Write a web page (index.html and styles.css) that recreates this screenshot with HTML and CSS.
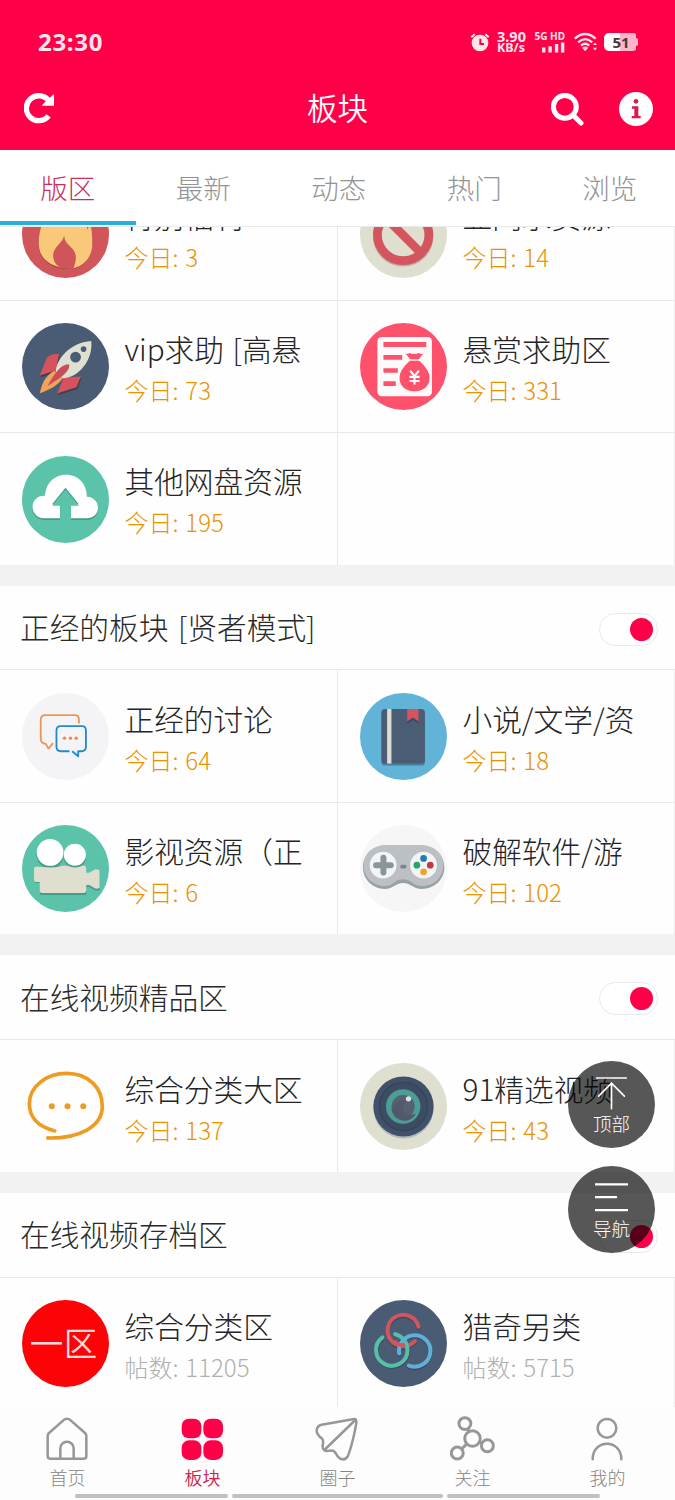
FILE: index.html
```html
<!DOCTYPE html>
<html lang="zh-CN">
<head>
<meta charset="utf-8">
<title>板块</title>
<link rel="stylesheet" href="styles.css">
</head>
<body>
<div class="app">
  <header class="top">
    <div class="status">
      <span class="clock">23:30</span>
      <div class="status-right">
        <svg class="alarm" viewBox="0 0 60 60"><circle cx="30" cy="33" r="25"/><path class="ear" d="M4 16 14 7M56 16 46 7"/><path class="hand" d="M31 20v16h11"/></svg>
        <div class="speed"><span>3.90</span><span>KB/s</span></div>
        <div class="cell-net"><span>5G HD</span>
          <svg viewBox="0 0 68 32"><path d="M0 16h10v15H0zM19 12h10v19H19zM38 6h10v25H38zM56 1h10v30H56z"/></svg>
        </div>
        <svg class="wifi" viewBox="0 0 68 58"><path d="M2 19Q33-8 64 19M12 30Q33 11 54 30M21 40Q33 29 45 40"/><path class="solid" d="M24 46q9-7 18 0l-9 10zM56 38l6-7 6 7zM56 46h12l-6 8z"/></svg>
        <div class="battery"><span>51</span></div>
      </div>
    </div>
    <div class="bar">
      <svg class="reload" viewBox="0 0 92 92"><path d="M72 21A37 37 0 1 0 73 68" /><path class="solid" d="M89 3v35H52l14-15z"/></svg>
      <h1>板块</h1>
      <svg class="search" viewBox="0 0 98 98"><circle cx="41" cy="41" r="34"/><path d="M66 66 89 89"/></svg>
      <svg class="info" viewBox="0 0 102 102"><circle cx="51" cy="51" r="51"/><circle class="mark" cx="51" cy="28" r="7"/><path class="mark" d="M39 43h19v29h7v7H38v-7h8V50h-7z"/></svg>
    </div>
  </header>
  <nav class="tabs"><a class="on">版区</a><a>最新</a><a>动态</a><a>热门</a><a>浏览</a></nav>

  <main class="scroll">
    <section class="group first">
      <div class="grid">
        <div class="cell">
          <svg class="ico" viewBox="0 0 260 260"><circle cx="130" cy="130" r="130" fill="#d0565b"/><path d="M119 233C70 222 49 195 49 160c0-31 18-42 22-62 23 6 30 15 33 32 25-31 12-66-3-86 57 15 91 48 93 83 6-9 7-18 5-27 9 18 11 37 11 60 0 36-22 64-56 73z" fill="#a14a43"/><path d="M117 229C70 218 50 192 50 156c0-31 10-62 22-90 23 6 30 35 33 32 25-31 12-46-3-66 57 15 91 48 93 83 6-9 7-18 5-27 9 18 10 49 10 72 0 35-22 62-56 71z" fill="#f9c979"/><path d="M126 132c-3 24-33 33-33 61 0 16 9 30 24 38l37 2c2-11 7-18 7-34 0-33-36-35-35-67z" fill="#cf555a"/></svg>
          <div class="txt"><h3>特别福利</h3><p>今日: 3</p></div>
        </div>
        <div class="cell">
          <svg class="ico" viewBox="0 0 260 260"><circle cx="130" cy="130" r="130" fill="#dedfcf"/><g fill="none" stroke-width="26"><g stroke="#b8b0a5"><circle cx="129" cy="136" r="77"/></g><g stroke="#d5555f"><circle cx="129" cy="131" r="77"/><path d="m74 77 109 109"/></g></g></svg>
          <div class="txt"><h3>亚网求资源</h3><p>今日: 14</p></div>
        </div>
        <div class="cell">
          <svg class="ico" viewBox="0 0 260 260"><circle cx="130" cy="130" r="130" fill="#4a5c74"/><path d="M111 93c-19-1-34 4-38 14l-20 50 48-15zM176 160l-13 32-58 19 20-48z" fill="#354254" transform="translate(2 5)"/><path d="M111 93c-19-1-34 4-38 14l-20 50 48-15zM176 160l-13 32-58 19 20-48z" fill="#d7525d"/><path d="M101 142c5-39 47-84 106-88 6 57-38 110-84 111-14 0-24-9-22-23z" fill="#dfe0d2"/><path d="M97 143c-29 16-37 38-44 67 28-11 52-21 69-45z" fill="#f0a45b"/><path d="M138 123c-22 1-43 29-62 66 24-16 48-29 60-47 5-7 8-18 2-19z" fill="#c84f59"/><circle cx="160" cy="102" r="16" fill="#4a5c74"/><circle cx="184" cy="78" r="8.500" fill="#4a5c74"/></svg>
          <div class="txt"><h3>vip求助 [高悬</h3><p>今日: 73</p></div>
        </div>
        <div class="cell">
          <svg class="ico" viewBox="0 0 260 260"><circle cx="130" cy="130" r="130" fill="#fe526c"/><rect x="52" y="42" width="163" height="177" rx="13" fill="#fffafa"/><path d="M70 57h128v15H70zM70 96h56v14H70zM70 135h43v14H70zM70 174h37v14H70zM136 91q10 2 12-1 14 5 28 0 5 4 13 1l-13 17h-26zM149 113h28q31 27 31 51c0 28-23 40-45 40s-45-12-45-40q0-24 31-51z" fill="#fe526c"/><path d="M150 142l13 17 13-17M163 159v25M148 161h30M148 173h30" fill="none" stroke="#fff" stroke-width="6"/></svg>
          <div class="txt"><h3>悬赏求助区</h3><p>今日: 331</p></div>
        </div>
        <div class="cell">
          <svg class="ico" viewBox="0 0 260 260"><circle cx="130" cy="130" r="130" fill="#5ac3aa"/><path d="M65 191a33 33 0 0 1 0-68h4c2-42 32-63 63-63 36 0 62 27 62 67 44 2 44 64 0 64z" fill="#459c88"/><path d="M65 186a33 33 0 0 1 0-67h4c2-42 32-63 63-63 36 0 62 27 62 66 44 2 44 64 0 64z" fill="#fff"/><path d="m130 95-40 49h24v45h32v-45h24z" fill="#459c88"/><path d="m130 100-40 49h24v43h32v-43h24z" fill="#5ac3aa"/></svg>
          <div class="txt"><h3>其他网盘资源</h3><p>今日: 195</p></div>
        </div>
        <div class="cell blank"></div>
      </div>
    </section>

    <section class="group">
      <div class="head"><h2>正经的板块 [贤者模式]</h2><i class="switch"></i></div>
      <div class="grid">
        <div class="cell">
          <svg class="ico" viewBox="0 0 260 260"><circle cx="130" cy="130" r="130" fill="#f4f4f6"/><g fill="none" stroke-width="5.500" stroke-linejoin="round"><path d="M170 91V79q0-13-13-13H70q-14 0-14 14v57q0 14 15 15l8 14 14-16" stroke="#ed9554"/><path d="M142 174h-26q-13 0-13-13v-49q0-13 13-13h63q12 0 12 13v49q0 13-13 13h-10v15l-18-15" stroke="#218cc9"/></g><g fill="#eb8753"><circle cx="127" cy="135" r="5"/><circle cx="145" cy="135" r="5"/><circle cx="162" cy="135" r="5"/></g></svg>
          <div class="txt"><h3>正经的讨论</h3><p>今日: 64</p></div>
        </div>
        <div class="cell">
          <svg class="ico" viewBox="0 0 260 260"><circle cx="130" cy="130" r="130" fill="#62b3d8"/><rect x="64" y="53" width="130" height="164" rx="11" fill="#477f9e"/><rect x="64" y="48" width="130" height="163" rx="11" fill="#4a5d74"/><path d="M81 48h13v163H81z" fill="#dcded3"/><path d="M141 52h34v40l-17-11-17 11z" fill="#394b60"/><path d="M141 48h34v37l-17-12-17 12z" fill="#d5555f"/></svg>
          <div class="txt"><h3>小说/文学/资</h3><p>今日: 18</p></div>
        </div>
        <div class="cell">
          <svg class="ico" viewBox="0 0 260 260"><circle cx="130" cy="130" r="130" fill="#5ac3aa"/><g fill="#479b88"><circle cx="84" cy="88" r="41"/><circle cx="158" cy="95" r="34"/><path d="M42 129h11v-4h132q7 0 7 7v14h9l18-11h13v61h-13l-18-11h-9v24H54v-36H43q-6 0-6-7v-30q0-7 5-7z"/></g><path d="M42 125h11l32 2q25 0 34-5h18q21 10 43 0h5q7 0 7 7v14h9l18-11q13 0 13 5v49q0 5-13 4l-18-11h-9v17q0 7-7 7H59q-6 0-6-7v-26H42q-6 0-6-6v-33q0-6 6-6z" fill="#dedfcf"/><g fill="#fff"><circle cx="84" cy="82" r="40"/><circle cx="158" cy="89" r="33"/></g></svg>
          <div class="txt"><h3>影视资源（正</h3><p>今日: 6</p></div>
        </div>
        <div class="cell">
          <svg class="ico" viewBox="0 0 260 260"><circle cx="130" cy="130" r="130" fill="#f6f6f7"/><path d="M77 64h105c32 0 70 17 70 64 0 35-29 63-67 63-29 0-31-18-56-18s-28 18-55 18c-36 0-65-28-65-63 0-47 37-64 68-64z" fill="#98a2a6"/><path d="M77 60h105c32 0 67 19 67 60 0 37-28 62-64 62-29 0-31-20-56-20s-28 20-55 20c-35 0-63-26-63-62 0-41 35-60 66-60z" fill="#bcbfc4"/><circle cx="69" cy="120" r="40" fill="#f2f5f6"/><circle cx="190" cy="120" r="40" fill="#f2f5f6"/><path d="M70 98v44M48 120h44" stroke="#89959b" stroke-width="18" stroke-linecap="round"/><rect x="120" y="119" width="19" height="11" rx="5" fill="#7c878d"/><circle cx="190" cy="100" r="10" fill="#237bb3"/><circle cx="170" cy="120" r="10" fill="#27a46c"/><circle cx="210" cy="120" r="10" fill="#c4373b"/><circle cx="190" cy="140" r="10" fill="#f4a029"/></svg>
          <div class="txt"><h3>破解软件/游</h3><p>今日: 102</p></div>
        </div>
      </div>
    </section>

    <section class="group">
      <div class="head"><h2>在线视频精品区</h2><i class="switch"></i></div>
      <div class="grid">
        <div class="cell">
          <svg class="ico" viewBox="0 0 260 260"><path d="M98 203C48 191 22 161 22 122c0-52 51-91 111-91 66 0 107 43 107 99 0 62-73 96-163 94" fill="none" stroke="#ee9c21" stroke-width="11" stroke-linecap="round"/><g fill="#ec9c2b"><circle cx="89" cy="129" r="9"/><circle cx="136" cy="129" r="9"/><circle cx="183" cy="129" r="9"/></g></svg>
          <div class="txt"><h3>综合分类大区</h3><p>今日: 137</p></div>
        </div>
        <div class="cell">
          <svg class="ico" viewBox="0 0 260 260"><circle cx="130" cy="130" r="130" fill="#dedfcf"/><circle cx="130" cy="136" r="90" fill="#aebac0"/><circle cx="130" cy="130" r="90" fill="#415169"/><circle cx="130" cy="130" r="72" fill="#3d4c63" stroke="#34445b" stroke-width="4"/><circle cx="129" cy="130" r="43" fill="#58616f" stroke="#4a9e94" stroke-width="17"/><path d="M94 139a39 39 0 0 1 43-27c-20 27-2 50 30 40a39 39 0 0 1-73-13z" fill="#51596a"/><circle cx="145" cy="107" r="8" fill="#dce3e5"/></svg>
          <div class="txt"><h3>91精选视频</h3><p>今日: 43</p></div>
        </div>
      </div>
    </section>

    <section class="group">
      <div class="head"><h2>在线视频存档区</h2><i class="switch"></i></div>
      <div class="grid">
        <div class="cell">
          <svg class="ico" viewBox="0 0 260 260"><circle cx="130" cy="130" r="130" fill="#fb0307"/><text class="zone" x="23" y="166" font-size="100" textLength="202">一区</text></svg>
          <div class="txt old"><h3>综合分类区</h3><p>帖数: 11205</p></div>
        </div>
        <div class="cell">
          <svg class="ico" viewBox="0 0 260 260"><circle cx="130" cy="130" r="130" fill="#4a5c74"/><g fill="none" stroke-width="12" stroke-linecap="round"><g stroke="#39495f" transform="translate(0 4)"><path d="M67 112a47 47 0 1 0 68 9"/><path d="M117 160a47 47 0 1 1 29 36"/><path d="M175 80a47 47 0 1 0-11 43"/></g><path d="M175 80a47 47 0 1 0-11 43" stroke="#cf555e"/><path d="M67 112a47 47 0 1 0 75 38c0-24-15-42-37-48" stroke="#57bfa7"/><path d="M117 160a47 47 0 1 1 29 36" stroke="#61aed7"/><path d="M103 126q11 9 27 11" stroke="#cf555e"/></g></svg>
          <div class="txt old"><h3>猎奇另类</h3><p>帖数: 5715</p></div>
        </div>
      </div>
    </section>
  </main>

  <footer class="dock">
    <a><svg viewBox="0 0 132 132"><path d="M8 57v61q0 7 7 7h102q7 0 7-7V57q0-5-4-9L77 10Q66 1 55 10L12 48q-4 4-4 9zM46 124V94a20 20 0 0 1 40 0v30"/></svg>首页</a>
    <a class="on"><svg viewBox="0 0 132 132"><g class="solid"><rect x="5" y="5" width="59" height="59" rx="22"/><rect x="70" y="5" width="59" height="59" rx="22"/><rect x="5" y="70" width="59" height="59" rx="22"/><rect x="70" y="70" width="59" height="59" rx="22"/></g></svg>板块</a>
    <a><svg viewBox="0 0 132 132"><path d="M117 6 20 23C2 27 1 48 13 58q14 8 11 22c-5 17 6 25 20 21q13-3 19 9c10 20 28 23 36 6 8-18 21-70 25-100q1-11-7-10zM28 99 121 9"/></svg>圈子</a>
    <a><svg class="nodes" viewBox="0 0 136 136"><circle cx="45" cy="23" r="18"/><circle cx="68" cy="68" r="23.500"/><circle cx="113" cy="90" r="18"/><circle cx="22" cy="112" r="18"/><path d="M54 40l3 6M90 79l6 3M36 99l14-14"/></svg>关注</a>
    <a><svg viewBox="0 0 132 132"><circle cx="66" cy="34" r="28"/><path d="M23 127c0-62 86-62 86 0"/></svg>我的</a>
    <div class="marks"><i></i><i class="wide"></i><i></i></div>
  </footer>

  <div class="floats">
    <a><svg viewBox="0 0 100 100"><path d="M5 3h90M50 96V19M11 58 50 19l39 39"/></svg>顶部</a>
    <a><svg class="lines" viewBox="0 0 100 100"><path d="M2 7h96M2 46h62M2 85h96"/></svg>导航</a>
  </div>
</div>
</body>
</html>
```
FILE: styles.css
```css
* { box-sizing: border-box; }
body, h1, h2, h3, p { margin: 0; font-weight: 300; }
body { background: #fdfdfd; font-family: "Noto Sans CJK SC", sans-serif; white-space: nowrap; }
svg { display: block; flex: none; }
.app { position: relative; width: 675px; height: 1500px; overflow: hidden; display: flex; flex-direction: column; }

.top { height: 150px; background: #ff0048; color: #fff; flex: none; }
.status { height: 84px; padding: 0 37px 0 38px; display: flex; align-items: center; justify-content: space-between; color: #ffe5ec; }
.clock { font: 700 24px/24px "Noto Sans", sans-serif; letter-spacing: .7px; }
.status-right { display: flex; align-items: center; }
.alarm { width: 20px; height: 20px; fill: #ffe5ec; margin-right: 7px; }
.alarm path { fill: none; stroke: #ffe5ec; stroke-width: 6; }
.alarm .hand { stroke: #ff0048; }
.speed { width: 30px; margin-right: 7px; display: flex; flex-direction: column; font: 700 14.500px/12px "Noto Sans", sans-serif; }
.speed span + span { font-size: 12.500px; }
.cell-net { width: 31px; margin-right: 9px; font: 700 10px/10px "Noto Sans", sans-serif; display: flex; flex-direction: column; align-items: flex-end; gap: 1px; }
.cell-net svg { width: 23px; height: 11px; fill: #ffe5ec; }
.wifi { width: 23px; height: 20px; fill: none; stroke: #ffe5ec; stroke-width: 7; margin-right: 7px; }
.wifi .solid { fill: #ffe5ec; stroke: none; }
.battery { width: 34px; height: 18px; border-radius: 5px; background: linear-gradient(90deg, #fff 48%, #ffb5c9 48%); display: flex; align-items: center; justify-content: center; color: #443841; font: 700 15px/18px "Noto Sans", sans-serif; clip-path: polygon(0 0, 94% 0, 94% 28%, 100% 32%, 100% 68%, 94% 72%, 94% 100%, 0 100%); }
.bar { height: 48px; padding: 0 22px 0 24px; display: grid; grid-template-columns: 96px 1fr 53px 49px; align-items: center; }
.bar h1 { font-size: 30.500px; line-height: 44px; margin-bottom: 2px; font-weight: 350; text-align: center; padding-left: 4px; }
.reload { width: 31px; height: 31px; fill: none; stroke: #fff; stroke-width: 16; }
.reload .solid { fill: #fff; stroke: none; }
.search { width: 33px; height: 33px; fill: none; stroke: #fff; stroke-width: 15; stroke-linecap: round; margin-top: 2px; }
.info { width: 34px; height: 34px; fill: #fff; justify-self: end; margin-top: 1px; }
.info .mark { fill: #d91c50; }

.tabs { height: 77px; flex: none; display: grid; grid-template-columns: repeat(5, 135.500px); background: #fff; border-bottom: 1px solid #e9e9e9; }
.tabs a { height: 75px; font-size: 27.500px; line-height: 74px; text-align: center; color: #949494; }
.tabs .on { color: #c92f59; background: linear-gradient(#2eafd8, #2eafd8) 0 71px / 100% 4px no-repeat; }

.scroll { height: 1180px; flex: none; overflow: hidden; }
.group { display: flow-root; margin-bottom: 21px; background: #fefefe; box-shadow: 0 0 0 21px #f2f2f3; }
.group.first { margin-top: -59.900px; }
.head { height: 83.800px; display: flex; align-items: center; justify-content: space-between; padding: 3px 17px 0 20px; }
.head h2 { font-size: 29.700px; line-height: 76px; margin-bottom: 4px; color: #292929; word-spacing: 3px; }
.switch { width: 59px; height: 33px; border: 1px solid #e9e9ec; border-radius: 17px; background: #fff; display: flex; align-items: center; justify-content: flex-end; padding-right: 4px; }
.switch::after { content: ""; width: 23px; height: 23px; border-radius: 50%; background: #ff0048; }
.grid { display: grid; grid-template-columns: 338px 337px; }
.cell { height: 132.500px; border-top: 1px solid #e9e9eb; border-right: 1px solid #e9e9eb; padding: 22.500px 0 0 22px; display: flex; gap: 15.500px; overflow: hidden; }
.ico { width: 87px; height: 87px; }
.zone { fill: #ffd9d9; font-family: "Noto Sans CJK SC", sans-serif; font-weight: 350; }
.txt h3 { font-size: 29.700px; line-height: 40px; margin-top: 5.800px; color: #242424; word-spacing: 2px; }
.txt p { font-size: 24px; line-height: 41px; color: #e99300; font-weight: 300; word-spacing: 1.500px; }
.blank, .cell:nth-child(even) { border-right-color: #eeeeef; }
.txt.old p { color: #b0b0b0; }

.dock { height: 93px; background: #fdfdfd; display: grid; grid-template-columns: repeat(5, 135px); grid-template-rows: 87px 6px; flex: none; }
.dock a { display: flex; flex-direction: column; align-items: center; padding-top: 10px; color: #858585; font-size: 18px; line-height: 26px; gap: 4px; }
.dock svg { width: 44px; height: 44px; margin-bottom: -1px; margin-right: 1px; fill: none; stroke: #979797; stroke-width: 7.500; stroke-linecap: round; stroke-linejoin: round; }
.dock svg.nodes { width: 45px; height: 45px; margin: -1px 0 -1px; stroke-width: 9; }
.dock .on { color: #cc234f; font-weight: 350; }
.dock .solid { fill: #ff0048; stroke: none; }
.marks { grid-column: 1 / -1; display: flex; justify-content: center; gap: 4px; }
.marks i { width: 153px; height: 4px; border-radius: 2px; background: #c0c0c0; }
.marks .wide { width: 211px; }

.floats { position: absolute; right: 20px; top: 1061px; display: flex; flex-direction: column; gap: 18px; }
.floats a { width: 87px; height: 87px; border-radius: 50%; background: rgba(0, 0, 0, .66); color: #fff; font-size: 18.500px; line-height: 24px; font-weight: 300; display: flex; flex-direction: column; align-items: center; padding-top: 16px; gap: 1px; }
.floats svg { width: 33px; height: 33px; fill: none; stroke: #fff; stroke-width: 5; stroke-linecap: round; }
.floats .lines { stroke-width: 7; }
```
